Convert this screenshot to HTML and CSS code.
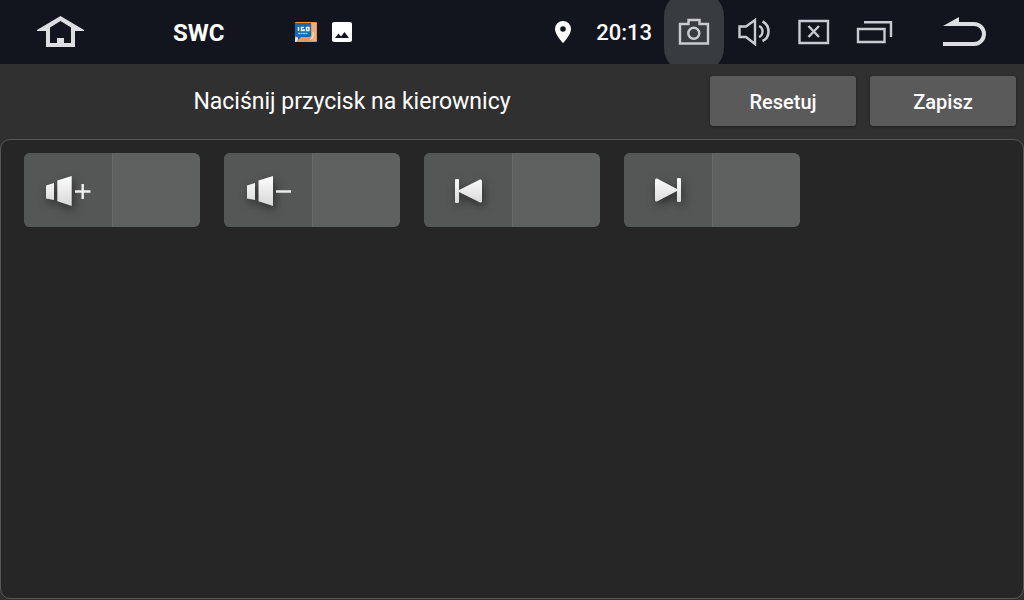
FILE: index.html
```html
<!DOCTYPE html>
<html lang="pl">
<head>
<meta charset="utf-8">
<meta name="viewport" content="width=device-width, initial-scale=1">
<title>SWC</title>
<link rel="stylesheet" href="styles.css">
</head>
<body>
<header class="status-bar">
  <button class="nav-button nav-wide" aria-label="Home">
    <svg width="120" height="64" viewBox="0 0 120 64"><path fill="#dcdee1" fill-rule="evenodd" d="M60.5 16 84 30v1h-9v16H46V31h-9v-1zM60.5 21 50 27.5V43h7v-5h7v5h7V27.500z"/></svg>
  </button>
  <h1 class="app-title">SWC</h1>
  <div class="notifications">
    <svg width="22" height="20" viewBox="0 0 22 20" aria-hidden="true">
      <rect width="22" height="20" rx="1" fill="#e79a58"/>
      <path d="M17 1h4v18h-4z" fill="#f1ae72"/><path d="M18 10q2 4-3 8" fill="none" stroke="#fbd9b4" stroke-width="1.500"/>
      <path d="M1 1h15v12q0 2-2 2H6l-4 4V15l-2-1V1z" fill="#1767b2"/>
      <path d="M0 16l3-1v3l-2 2H0z" fill="#d7e7f2"/>
      <path d="M3.500 5v4M9 5.500H6.500v3H9V7M11.500 5.500H14v3h-2.500z" fill="none" stroke="#e3f2fb" stroke-width="1.500"/>
      <path d="M3 11.500h10" stroke="#9fcbea" stroke-width="1.500" stroke-dasharray="2 .5"/>
    </svg>
    <svg width="20" height="20" viewBox="0 0 20 20" aria-hidden="true">
      <rect width="20" height="20" rx="2" fill="#fff"/><path fill="#12151e" d="M3 16 6.500 11.500 9 14.500 12.500 10 17 16z"/>
    </svg>
  </div>
  <svg class="pin" width="16" height="22" viewBox="0 0 16 22" aria-hidden="true"><path fill="#fff" fill-rule="evenodd" d="M8 0a8 8 0 0 1 8 8c0 6-8 14-8 14S0 14 0 8a8 8 0 0 1 8-8zm0 5.200a2.800 2.800 0 1 0 0 5.600 2.800 2.800 0 0 0 0-5.600z"/></svg>
  <time class="clock">20:13</time>
  <nav class="nav-buttons">
    <button class="nav-button nav-active" aria-label="Screenshot">
      <svg class="line-icon" width="60" height="64" viewBox="0 0 60 64"><path d="M16 24h8.500v-4h11v4H44v19.500H16z"/><circle cx="29.800" cy="33.300" r="5.500"/></svg>
    </button>
    <button class="nav-button" aria-label="Volume">
      <svg class="line-icon" width="60" height="64" viewBox="0 0 60 64"><path d="M15.500 26.500h6.500L31 20v24L22 37H15.500z"/><path d="M35 26q3.500 1.500 3.500 5.500T35 37"/><path d="M38.500 21.500q6 3 6 10t-6 9.500" stroke-width="2.600"/></svg>
    </button>
    <button class="nav-button" aria-label="Close">
      <svg class="line-icon" width="60" height="64" viewBox="0 0 60 64"><path d="M15.500 21h28.500v22H15.500zM24.500 26l10.500 11M35 26 24.500 37"/></svg>
    </button>
    <button class="nav-button" aria-label="Recent apps">
      <svg class="line-icon" width="60" height="64" viewBox="0 0 60 64"><path d="M14 29h26.500v13H14zM20 22.300h27V37"/></svg>
    </button>
    <button class="nav-button nav-wide" aria-label="Back">
      <svg width="120" height="64" viewBox="0 0 120 64"><path fill="#dcdee1" d="M39 26 55 17v7l-5 2z"/><path d="M49 24h21a10 10 0 0 1 0 20H39" fill="none" stroke="#dcdee1" stroke-width="4"/></svg>
    </button>
  </nav>
</header>

<section class="toolbar">
  <p class="prompt">Naciśnij przycisk na kierownicy</p>
  <button class="action">Resetuj</button>
  <button class="action">Zapisz</button>
</section>

<main class="panel">
  <button class="key" aria-label="Volume up">
    <span class="key-icon"><svg width="88" height="74" viewBox="0 0 88 74">
      <defs><linearGradient id="metal" gradientUnits="userSpaceOnUse" x1="0" y1="22" x2="0" y2="52"><stop offset="0" stop-color="#fff"/><stop offset="1" stop-color="#d8d8d8"/></linearGradient></defs>
      <path class="metal" fill="url(#metal)" d="M22 32.500 30 30v17L22 45.500zM33.300 27.500 47.700 23v30L33.300 48.200z"/><path d="M51 38.500h15.500M58.700 31v15" stroke="#ededed" stroke-width="2.500"/></svg></span>
    <span class="key-value"></span>
  </button>
  <button class="key" aria-label="Volume down">
    <span class="key-icon"><svg width="88" height="74" viewBox="0 0 88 74">
      <path class="metal" fill="url(#metal)" d="M23 32.500 31 30v17L23 45.500zM34.500 27.500 49 23v30L34.500 48.200z"/><path d="M52 38.500h15" stroke="#ededed" stroke-width="2.500"/></svg></span>
    <span class="key-value"></span>
  </button>
  <button class="key" aria-label="Previous">
    <span class="key-icon"><svg width="88" height="74" viewBox="0 0 88 74">
      <path class="metal" fill="url(#metal)" d="M32 26h2q1 0 1 1v10L56 26.500q2-.5 2 1.500v20q0 2-2 1.500L35 39v10q0 1-1 1h-2q-1 0-1-1V27q0-1 1-1z"/></svg></span>
    <span class="key-value"></span>
  </button>
  <button class="key" aria-label="Next">
    <span class="key-icon"><svg width="88" height="74" viewBox="0 0 88 74">
      <path class="metal" fill="url(#metal)" d="M56 25h-2q-1 0-1 1v10L33 25.500q-2-.5-2 1.500v20q0 2 2 1.500L53 38v10q0 1 1 1h2q1 0 1-1V26q0-1-1-1z"/></svg></span>
    <span class="key-value"></span>
  </button>
</main>
</body>
</html>
```

FILE: styles.css
```css
* { box-sizing: border-box; }

body {
  margin: 0;
  min-height: 100vh;
  display: flex;
  flex-direction: column;
  background: #303030;
  color: #fff;
  font-family: Roboto, "Noto Sans", sans-serif;
}

button {
  padding: 0;
  border: 0;
  background: none;
  color: inherit;
  font: inherit;
  cursor: pointer;
}

svg { display: block; }

.status-bar {
  display: flex;
  align-items: center;
  height: 64px;
  overflow: hidden;
  background: #12151e;
}

.nav-buttons {
  display: flex;
  align-items: center;
}

.nav-button {
  width: 60px;
  height: 64px;
}

.nav-wide { width: 120px; }

.nav-active {
  height: 80px;
  border-radius: 24px;
  background: #383b40;
}

.line-icon {
  fill: none;
  stroke: #c9cbd0;
  stroke-width: 2.4;
}

.app-title {
  width: 122px;
  margin: 0 0 0 53px;
  padding-top: 2px;
  font-size: 24px;
  line-height: 32px;
  font-weight: 700;
}

.notifications {
  display: flex;
  gap: 15px;
}

.pin { margin-left: auto; }

.clock {
  margin: 0 12px 0 25px;
  padding-top: 2px;
  font-size: 22px;
  line-height: 32px;
  font-weight: 500;
}

.toolbar {
  display: flex;
  align-items: center;
  gap: 14px;
  padding: 12px 8px;
}

.prompt {
  flex: 1;
  margin: 0;
  padding-top: 2px;
  text-align: center;
  font-size: 23px;
  line-height: 32px;
}

.action {
  width: 146px;
  height: 50px;
  padding-top: 2px;
  border-radius: 3px;
  background: #5a5a5b;
  box-shadow: 0 1px 3px #1d1d1d;
  font-size: 20px;
  font-weight: 500;
}

.panel {
  flex: 1;
  display: flex;
  flex-wrap: wrap;
  align-content: flex-start;
  gap: 24px;
  margin: 1px 0;
  padding: 13px 23px;
  border: 1px solid #575757;
  border-radius: 10px;
  background: #262626;
}

.key {
  display: flex;
  width: 176px;
  height: 74px;
  border-radius: 6px;
  overflow: hidden;
  background: #5f6160;
}

.key-icon {
  width: 88px;
  height: 74px;
  background: #555756;
}

.key-value {
  flex: 1;
  height: 74px;
  border-left: 1px solid #686a69;
}

.metal { filter: drop-shadow(2px 4px 5px #222c); }
```
